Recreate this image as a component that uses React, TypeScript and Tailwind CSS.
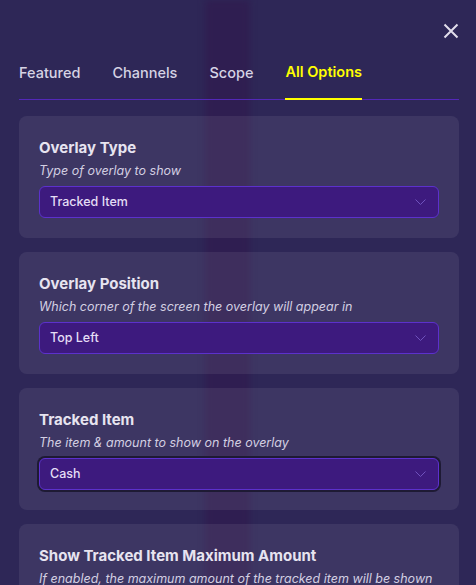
import React, { useState } from 'react';

const tabs = ['Featured', 'Channels', 'Scope', 'All Options'];

const options = [
  { title: 'Overlay Type', hint: 'Type of overlay to show', value: 'Tracked Item' },
  { title: 'Overlay Position', hint: 'Which corner of the screen the overlay will appear in', value: 'Top Left' },
  { title: 'Tracked Item', hint: 'The item & amount to show on the overlay', value: 'Cash', focused: true },
];

function Chevron() {
  return (
    <svg width="11" height="6" viewBox="0 0 11 6" fill="none" className="shrink-0">
      <path d="M0.5 0.5 L5.5 5.5 L10.5 0.5" stroke="#6f52bd" strokeWidth="1" />
    </svg>
  );
}

function SelectBox({ value, focused }: { value: string; focused?: boolean }) {
  return (
    <div
      className={`mt-[5px] h-8 w-full flex items-center justify-between rounded-md border border-[#5c31cc] bg-[#3d1a7e] pl-[10px] pr-3 ${
        focused ? 'ring-2 ring-[#1e1a34]' : ''
      }`}
    >
      <span className="text-[12.5px] font-medium text-[#e4def5]">{value}</span>
      <Chevron />
    </div>
  );
}

export default function App() {
  const [active, setActive] = useState('All Options');

  return (
    <div
      className="relative w-full h-[585px] overflow-hidden bg-[#2e2757]"
      style={{ fontFamily: 'Inter, "Noto Sans", sans-serif' }}
    >
      {/* blurred backdrop stripe */}
      <div className="absolute top-0 bottom-0 left-[205px] w-[45px] bg-[#311b4e]/70 blur-[3px]" />

      <div className="relative pl-[19px] pr-[17px]">
        <div className="flex justify-end pt-[23px]">
          <button className="w-4 h-4 cursor-pointer">
            <svg width="16" height="16" viewBox="0 0 16 16" fill="none">
              <path d="M1.5 1.5 L14.5 14.5 M14.5 1.5 L1.5 14.5" stroke="#e2deec" strokeWidth="2" />
            </svg>
          </button>
        </div>

        {/* tabs */}
        <div className="mt-[23px] flex gap-8 border-b border-[#5328b8]">
          {tabs.map((t) => (
            <button
              key={t}
              onClick={() => setActive(t)}
              className={`pb-4 text-[14.5px] leading-5 cursor-pointer ${
                active === t
                  ? 'font-semibold text-[#ffff00] border-b-2 border-[#ffff00] -mb-px'
                  : 'font-medium text-[#d6d3e4]'
              }`}
            >
              {t}
            </button>
          ))}
        </div>

        {/* option cards */}
        <div className="mt-4 flex flex-col gap-[14px]">
          {options.map((o) => (
            <div key={o.title} className="rounded-lg bg-white/[0.07] px-5 pt-[21px] pb-5">
              <div className="text-[15px] leading-[22px] font-bold text-[#e7e4f0]">{o.title}</div>
              <div className="mt-0.5 text-[12.5px] leading-5 italic text-[#d3cfe2]">{o.hint}</div>
              <SelectBox value={o.value} focused={o.focused} />
            </div>
          ))}
          <div className="rounded-lg bg-white/[0.07] px-5 pt-[21px] pb-5">
            <div className="text-[15px] leading-[22px] font-bold text-[#e7e4f0]">Show Tracked Item Maximum Amount</div>
            <div className="mt-0.5 text-[12.5px] leading-5 italic text-[#d3cfe2]">
              If enabled, the maximum amount of the tracked item will be shown
            </div>
          </div>
        </div>
      </div>
    </div>
  );
}
